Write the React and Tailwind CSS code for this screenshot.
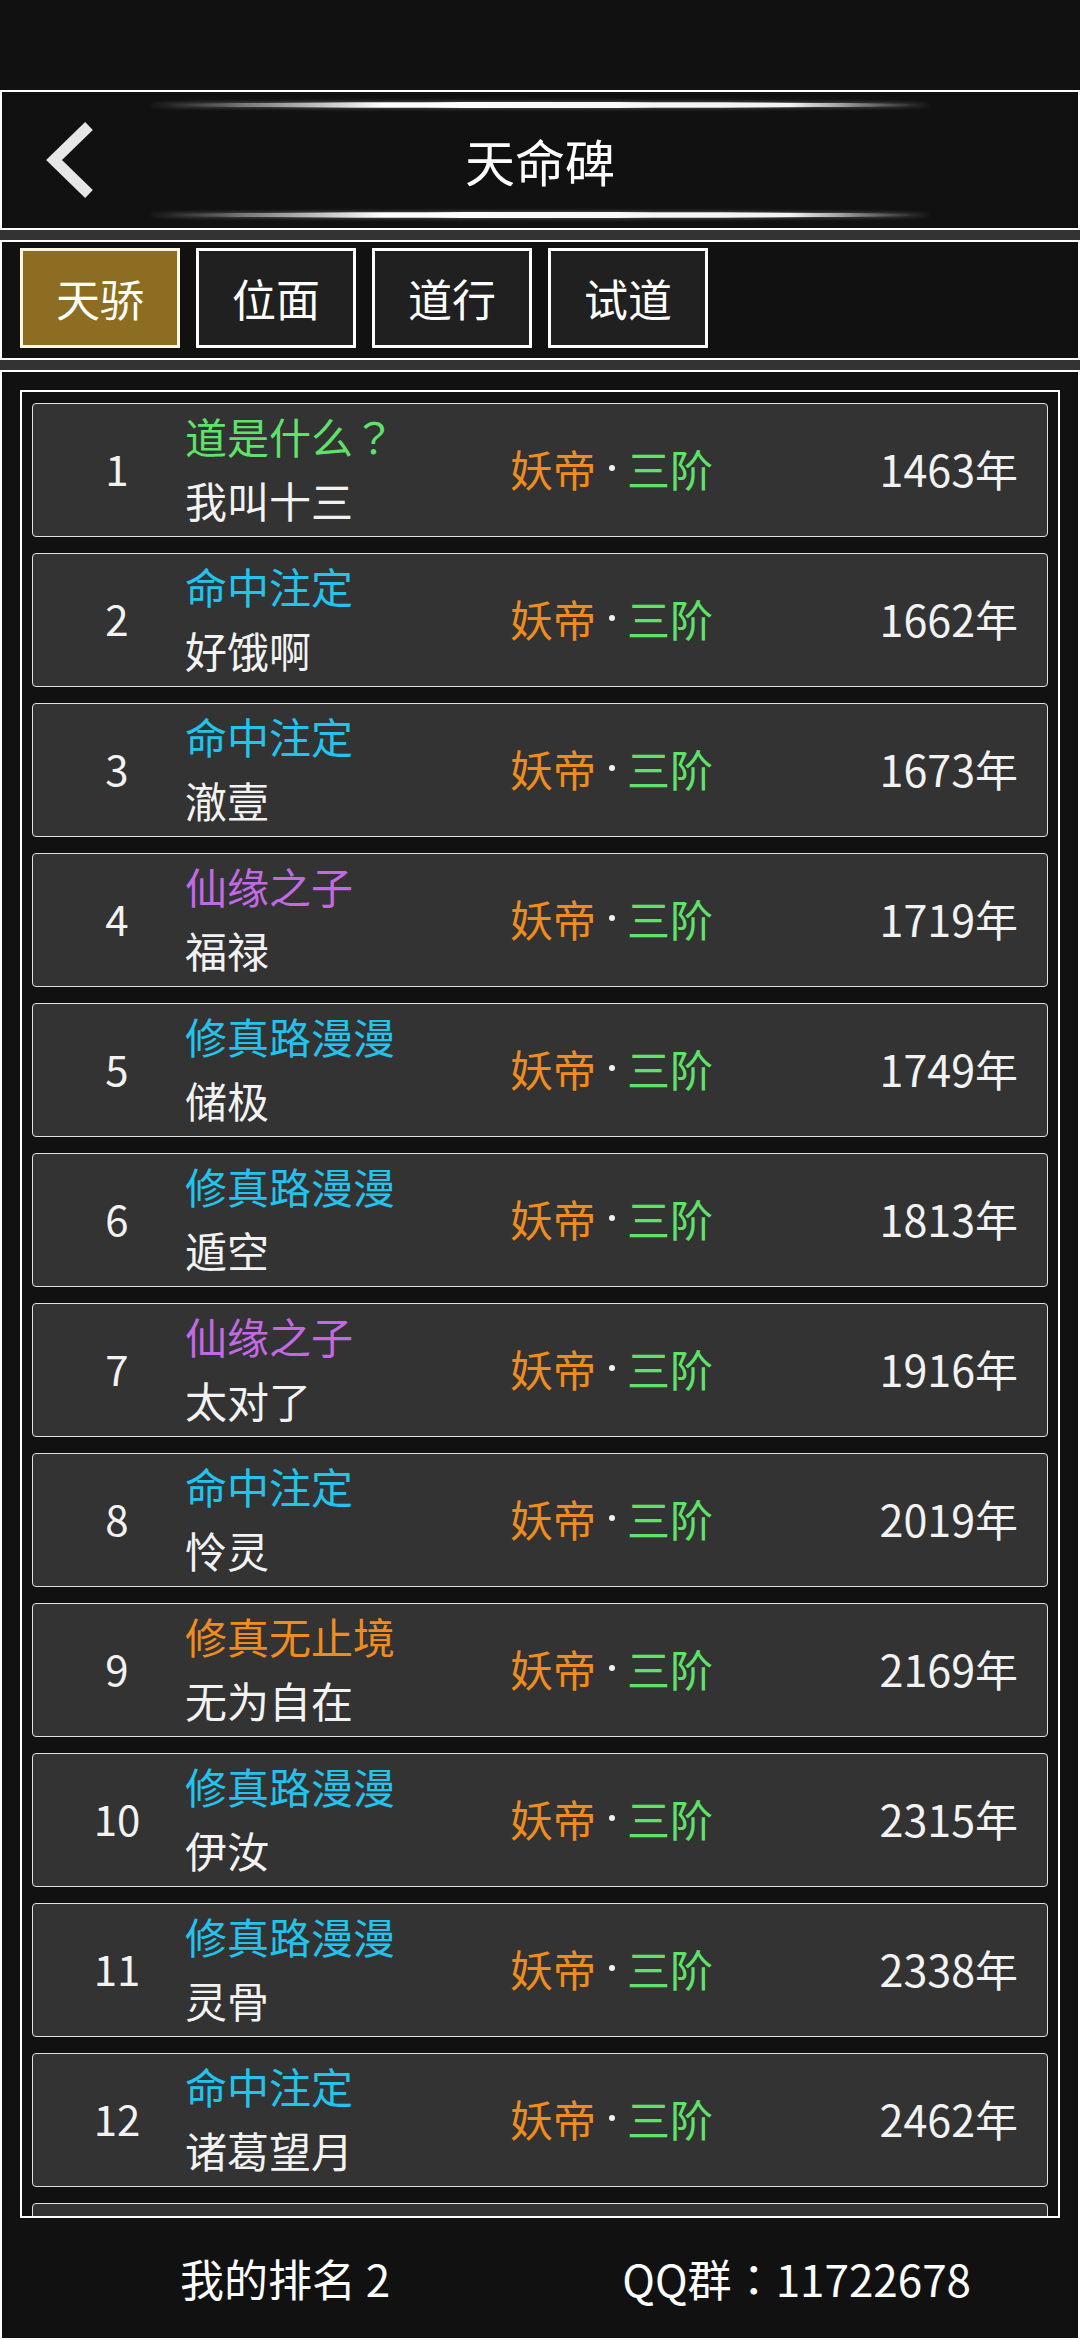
import React from 'react';

const font = { fontFamily: '"Noto Sans CJK SC", "Noto Sans", sans-serif' };
// centred full-width punctuation, as in the reference
const punct = { fontFamily: '"Noto Sans CJK JP", "Noto Sans CJK SC", sans-serif' };

// title colours by rank name
const titleColor = {
  道是什么: 'text-[#5fe26a]',
  命中注定: 'text-[#22c4ee]',
  修真路漫漫: 'text-[#22c4ee]',
  仙缘之子: 'text-[#c26ae6]',
  修真无止境: 'text-[#f08c1e]',
};

const rows = [
  { title: '道是什么', mark: '？', key: '道是什么', name: '我叫十三', years: 1463 },
  { title: '命中注定', key: '命中注定', name: '好饿啊', years: 1662 },
  { title: '命中注定', key: '命中注定', name: '澈壹', years: 1673 },
  { title: '仙缘之子', key: '仙缘之子', name: '福禄', years: 1719 },
  { title: '修真路漫漫', key: '修真路漫漫', name: '储极', years: 1749 },
  { title: '修真路漫漫', key: '修真路漫漫', name: '遁空', years: 1813 },
  { title: '仙缘之子', key: '仙缘之子', name: '太对了', years: 1916 },
  { title: '命中注定', key: '命中注定', name: '怜灵', years: 2019 },
  { title: '修真无止境', key: '修真无止境', name: '无为自在', years: 2169 },
  { title: '修真路漫漫', key: '修真路漫漫', name: '伊汝', years: 2315 },
  { title: '修真路漫漫', key: '修真路漫漫', name: '灵骨', years: 2338 },
  { title: '命中注定', key: '命中注定', name: '诸葛望月', years: 2462 },
];

const tabs = ['天骄', '位面', '道行', '试道'];

function GlowLine() {
  return (
    <div className="h-[6px] w-[780px] rounded-[50%] bg-[linear-gradient(90deg,transparent,#777_12%,#fff_30%,#f2f2f2_82%,transparent)] shadow-[0_0_4px_rgba(255,255,255,0.35)]" />
  );
}

function Row({ rank, row }) {
  return (
    <div className="h-[134px] shrink-0 flex items-center pb-[4px] border border-[#e0e0e0] rounded-[4px] bg-[#333333]">
      {row && (
        <>
          <div className="w-[136px] ml-[16px] text-center text-[42px] leading-none text-[#f2f2f2]">{rank}</div>
          <div className="w-[325px] flex flex-col text-[42px] leading-[64px]">
            <span className={titleColor[row.key]}>
              {row.title}
              {row.mark && <span style={punct}>{row.mark}</span>}
            </span>
            <span className="text-[#f2f2f2]">{row.name}</span>
          </div>
          <div className="flex items-center text-[43px] leading-none">
            <span className="text-[#f08c1e]">妖帝</span>
            <span className="w-[31px] flex justify-center">
              <span className="w-[6px] h-[6px] rounded-full bg-[#f2f2f2]" />
            </span>
            <span className="text-[#5fe26a]">三阶</span>
          </div>
          <div className="ml-auto pr-[29px] text-[43px] leading-none text-[#f2f2f2]">{row.years}年</div>
        </>
      )}
    </div>
  );
}

export default function App() {
  return (
    <div className="w-[1080px] h-[2340px] bg-[#333333] flex flex-col overflow-hidden" style={font}>
      {/* status bar */}
      <div className="h-[90px] shrink-0 bg-[#111111]" />

      {/* header */}
      <div className="relative h-[140px] shrink-0 border-2 border-white bg-[#111111] flex flex-col items-center">
        <svg className="absolute left-[43px] top-[28px]" width="52" height="80" viewBox="0 0 52 80">
          <path d="M44 6 L9 40 L44 74" fill="none" stroke="#e6e6e6" strokeWidth="11" />
        </svg>
        <div className="mt-[10px]">
          <GlowLine />
        </div>
        <div className="flex-1 flex items-center text-[50px] text-white">天命碑</div>
        <div className="mb-[10px]">
          <GlowLine />
        </div>
      </div>

      <div className="h-[10px] shrink-0" />

      {/* tabs */}
      <div className="h-[120px] shrink-0 border-2 border-white bg-[#111111] flex items-start gap-[16px] pt-[6px] pl-[18px]">
        {tabs.map((t, i) => (
          <div
            key={t}
            className={`w-[160px] h-[100px] border-[3px] flex items-center justify-center text-[44px] text-white ${
              i === 0 ? 'bg-[#8d6d22] border-[#fff8e6]' : 'bg-[#202020] border-white'
            }`}
          >
            {t}
          </div>
        ))}
      </div>

      <div className="h-[10px] shrink-0" />

      {/* list + footer */}
      <div className="flex-1 border-2 border-white bg-[#111111] flex flex-col">
        <div className="mt-[18px] mx-[18px] h-[1828px] shrink-0 border-2 border-white overflow-hidden flex flex-col gap-[16px] px-[10px] pt-[11px]">
          {rows.map((r, i) => (
            <Row key={i} rank={i + 1} row={r} />
          ))}
          <Row rank={13} row={null} />
        </div>
        <div className="flex-1 flex items-center text-[44px] text-white">
          <span className="ml-[178px]">我的排名 2</span>
          <span className="ml-auto mr-[107px]">
            QQ群<span style={punct}>：</span>11722678
          </span>
        </div>
      </div>
    </div>
  );
}
